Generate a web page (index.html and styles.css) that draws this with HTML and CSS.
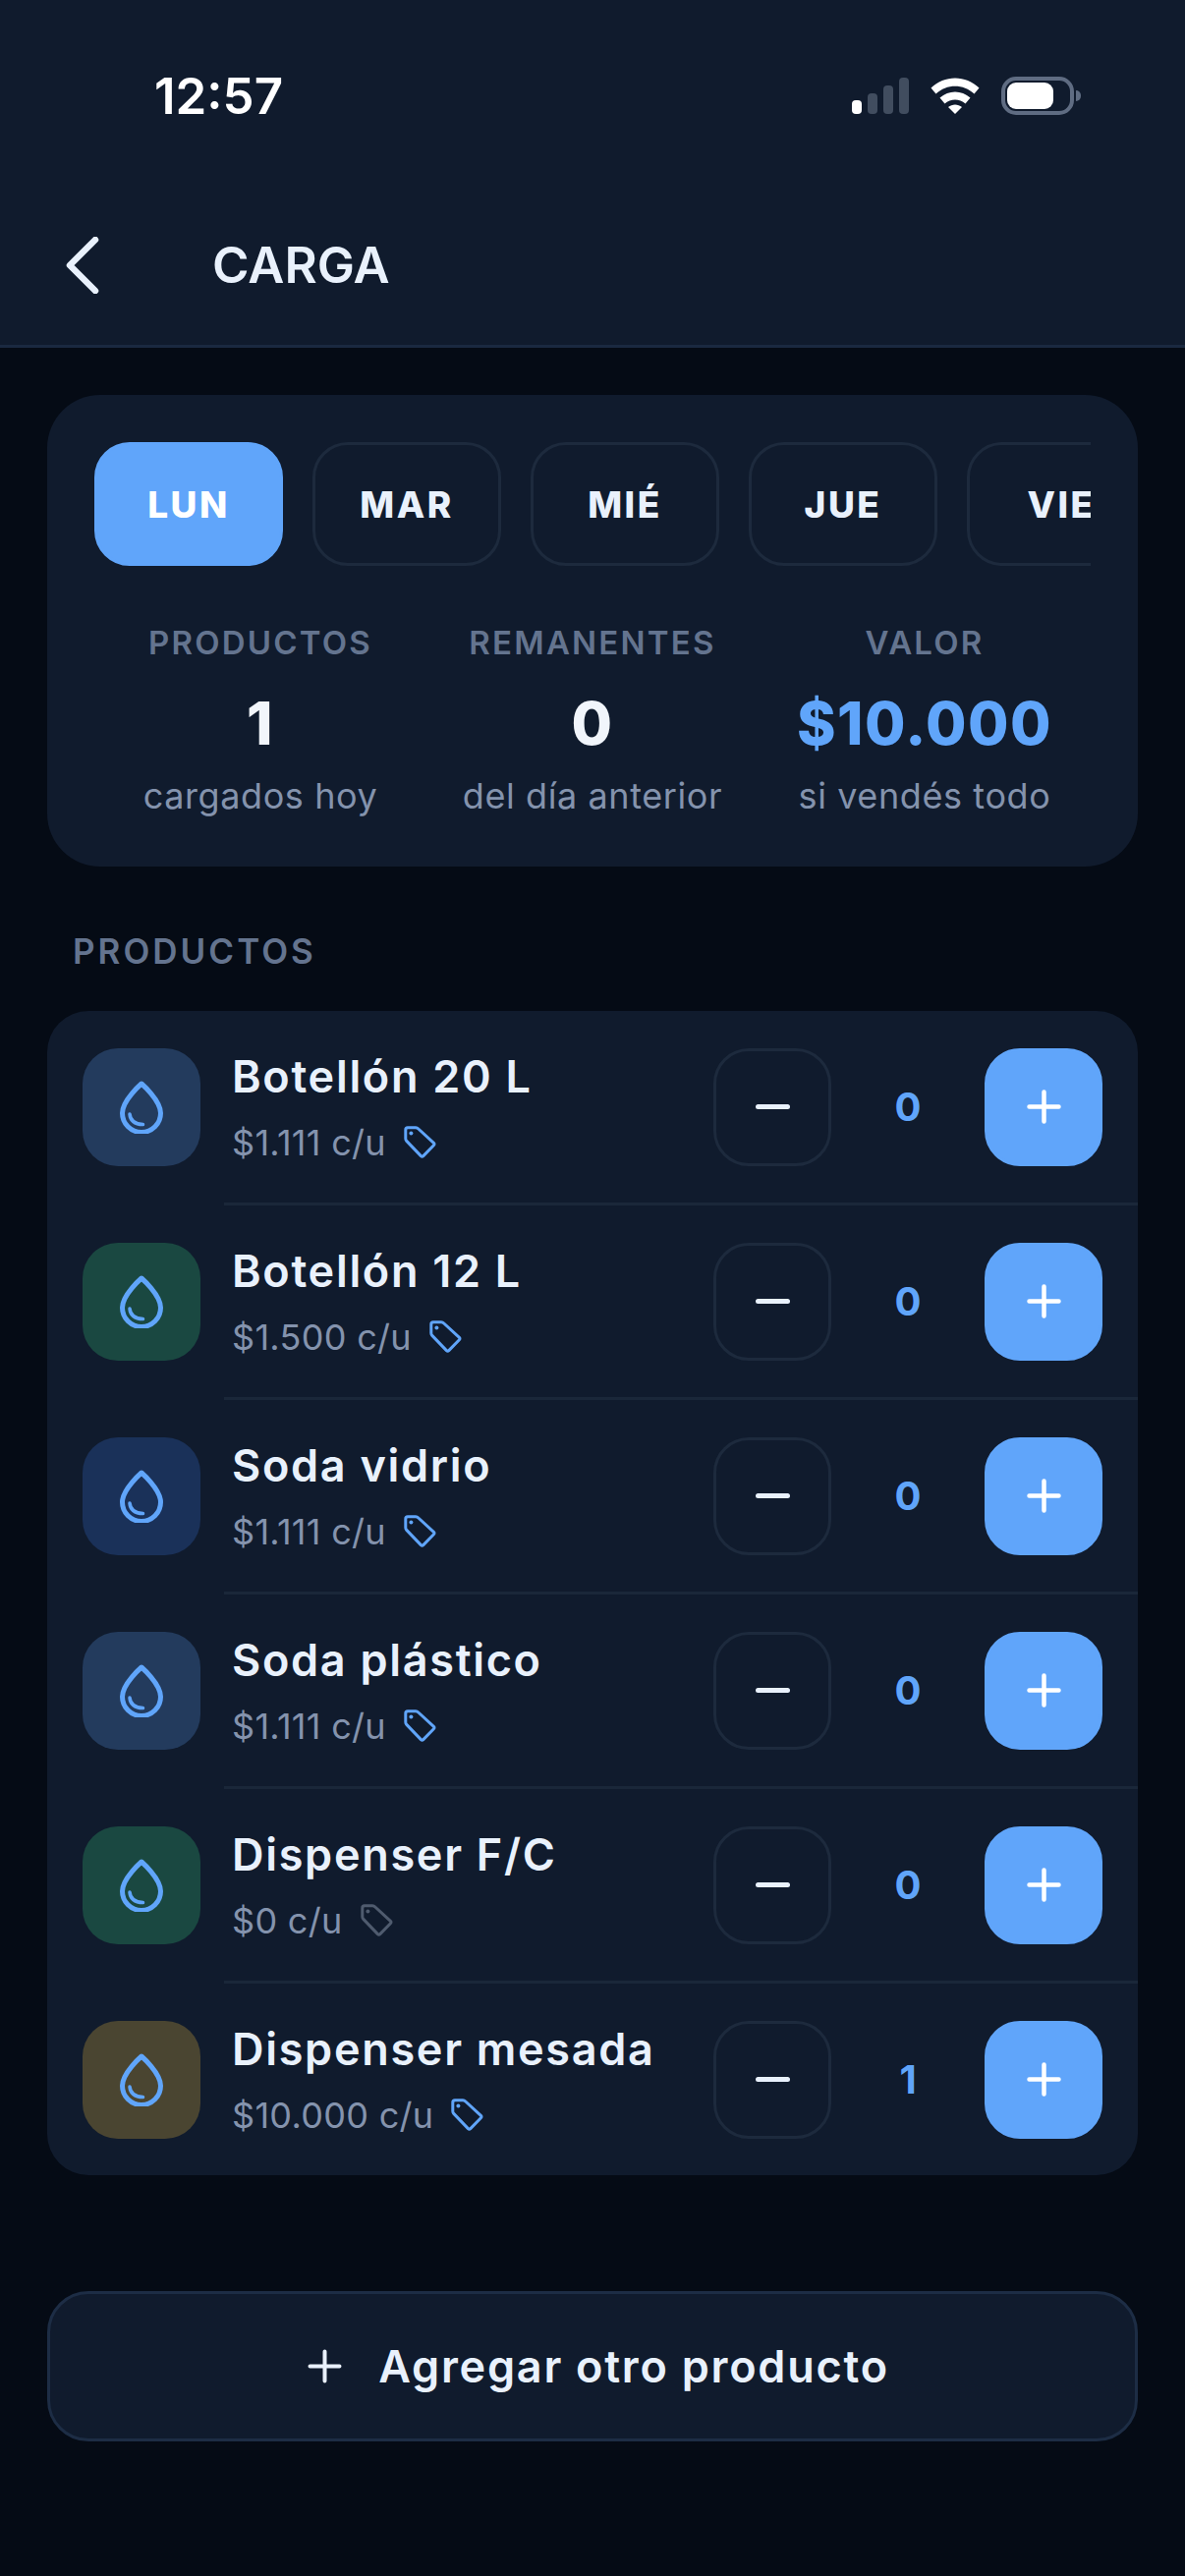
FILE: index.html
```html
<!DOCTYPE html>
<html lang="es">
  <head>
    <meta charset="utf-8">
    <meta name="viewport" content="width=device-width, initial-scale=1.0">
    <title>Carga</title>
    <link rel="stylesheet" href="styles.css">
  </head>
  <body>
    <svg class="defs" aria-hidden="true">
      <symbol id="drop" viewBox="0 0 44 54">
        <path class="drop-outer" d="M22 3 C22 3 2.5 20 2.5 33 A19.5 19.5 0 0 0 41.5 33 C41.5 20 22 3 22 3 Z"/>
        <path class="drop-inner" d="M10 34 C10.5 40.5 15 44.2 23.5 44.6"/>
      </symbol>
      <symbol id="tag" viewBox="0 0 33 33">
        <path class="tag-outer" d="M4 1.8 H12 Q13.6 1.8 14.8 3 L30.4 17.4 Q31.6 18.6 30.4 19.8 L19.8 30.6 Q18.6 31.8 17.4 30.6 L2.8 15.4 Q1.8 14.4 1.8 13 V4 Q1.8 1.8 4 1.8 Z"/>
        <circle class="tag-dot" cx="7.4" cy="7.6" r="2"/>
      </symbol>
      <symbol id="minus" viewBox="0 0 35 35">
        <path d="M2.5 17.5 H32.5"/>
      </symbol>
      <symbol id="plus" viewBox="0 0 35 35">
        <path d="M2.5 17.5 H32.5 M17.5 2.5 V32.5"/>
      </symbol>
    </svg>

    <header class="top">
      <div class="status">
        <span class="clock">12:57</span>
        <div class="status-icons">
          <div class="signal">
            <i class="bar bar-1"></i>
            <i class="bar bar-2"></i>
            <i class="bar bar-3"></i>
            <i class="bar bar-4"></i>
          </div>
          <svg class="wifi" viewBox="0 0 50 37">
            <path d="M0.5 10.5 C14 -3 36 -3 49.5 10.5 L44.5 16.5 C33.5 6 16.5 6 5.5 16.5 Z"/>
            <path d="M9.5 20.5 C18.5 12.5 31.5 12.5 40.5 20.5 L35.5 26.5 C29.5 21 20.5 21 14.5 26.5 Z"/>
            <path d="M18 30 C22 26.6 28 26.6 32 30 L25 37 Z"/>
          </svg>
          <div class="battery">
            <div class="battery-body"><div class="battery-fill"></div></div>
            <div class="battery-cap"></div>
          </div>
        </div>
      </div>
      <div class="nav">
        <svg class="back" viewBox="0 0 34 58">
          <path d="M30 3 L4 29 L30 55"/>
        </svg>
        <h1>CARGA</h1>
      </div>
    </header>

    <main class="content">
      <section class="card summary">
        <div class="days">
          <button class="day active">LUN</button>
          <button class="day">MAR</button>
          <button class="day">MIÉ</button>
          <button class="day">JUE</button>
          <button class="day">VIE</button>
        </div>
        <div class="stats">
          <div class="stat">
            <div class="stat-label">PRODUCTOS</div>
            <div class="stat-value">1</div>
            <div class="stat-sub">cargados hoy</div>
          </div>
          <div class="stat">
            <div class="stat-label">REMANENTES</div>
            <div class="stat-value">0</div>
            <div class="stat-sub">del día anterior</div>
          </div>
          <div class="stat">
            <div class="stat-label">VALOR</div>
            <div class="stat-value accent">$10.000</div>
            <div class="stat-sub">si vendés todo</div>
          </div>
        </div>
      </section>

      <h2 class="section-title">PRODUCTOS</h2>

      <section class="card products">
        <div class="product">
          <div class="thumb thumb-slate"><svg class="drop"><use href="#drop"/></svg></div>
          <div class="info">
            <div class="name">Botellón 20 L</div>
            <div class="price">$1.111 c/u <svg class="tag"><use href="#tag"/></svg></div>
          </div>
          <div class="stepper">
            <button class="step"><svg class="step-icon"><use href="#minus"/></svg></button>
            <span class="qty">0</span>
            <button class="step add"><svg class="step-icon"><use href="#plus"/></svg></button>
          </div>
        </div>
        <div class="product">
          <div class="thumb thumb-green"><svg class="drop"><use href="#drop"/></svg></div>
          <div class="info">
            <div class="name">Botellón 12 L</div>
            <div class="price">$1.500 c/u <svg class="tag"><use href="#tag"/></svg></div>
          </div>
          <div class="stepper">
            <button class="step"><svg class="step-icon"><use href="#minus"/></svg></button>
            <span class="qty">0</span>
            <button class="step add"><svg class="step-icon"><use href="#plus"/></svg></button>
          </div>
        </div>
        <div class="product">
          <div class="thumb thumb-navy"><svg class="drop"><use href="#drop"/></svg></div>
          <div class="info">
            <div class="name">Soda vidrio</div>
            <div class="price">$1.111 c/u <svg class="tag"><use href="#tag"/></svg></div>
          </div>
          <div class="stepper">
            <button class="step"><svg class="step-icon"><use href="#minus"/></svg></button>
            <span class="qty">0</span>
            <button class="step add"><svg class="step-icon"><use href="#plus"/></svg></button>
          </div>
        </div>
        <div class="product">
          <div class="thumb thumb-slate"><svg class="drop"><use href="#drop"/></svg></div>
          <div class="info">
            <div class="name">Soda plástico</div>
            <div class="price">$1.111 c/u <svg class="tag"><use href="#tag"/></svg></div>
          </div>
          <div class="stepper">
            <button class="step"><svg class="step-icon"><use href="#minus"/></svg></button>
            <span class="qty">0</span>
            <button class="step add"><svg class="step-icon"><use href="#plus"/></svg></button>
          </div>
        </div>
        <div class="product">
          <div class="thumb thumb-green"><svg class="drop"><use href="#drop"/></svg></div>
          <div class="info">
            <div class="name">Dispenser F/C</div>
            <div class="price">$0 c/u <svg class="tag muted"><use href="#tag"/></svg></div>
          </div>
          <div class="stepper">
            <button class="step"><svg class="step-icon"><use href="#minus"/></svg></button>
            <span class="qty">0</span>
            <button class="step add"><svg class="step-icon"><use href="#plus"/></svg></button>
          </div>
        </div>
        <div class="product">
          <div class="thumb thumb-olive"><svg class="drop"><use href="#drop"/></svg></div>
          <div class="info">
            <div class="name">Dispenser mesada</div>
            <div class="price">$10.000 c/u <svg class="tag"><use href="#tag"/></svg></div>
          </div>
          <div class="stepper">
            <button class="step"><svg class="step-icon"><use href="#minus"/></svg></button>
            <span class="qty">1</span>
            <button class="step add"><svg class="step-icon"><use href="#plus"/></svg></button>
          </div>
        </div>
      </section>

      <button class="add-product">
        <svg class="add-icon"><use href="#plus"/></svg>
        Agregar otro producto
      </button>
    </main>
  </body>
</html>
```

FILE: styles.css
```css
* {
  box-sizing: border-box;
  margin: 0;
  padding: 0;
}
html, body {
  height: 100%;
}
body {
  background-color: #050b15;
  color: #e9f1fc;
  font-family: Inter, "Noto Sans", sans-serif;
}
button {
  font-family: inherit;
  color: inherit;
  background: none;
  border: 0;
}
.defs {
  display: none;
}

/* header */
.top {
  height: 354px;
  padding-top: 78px;
  background-color: #101b2d;
  border-bottom: 3px solid #1a2940;
}
.status {
  display: flex;
  justify-content: space-between;
  align-items: center;
  height: 39px;
  padding: 0 106px 0 157px;
}
.clock {
  font-size: 51px;
  font-weight: 600;
  line-height: 39px;
  color: #fff;
}
.status-icons {
  display: flex;
  align-items: center;
  gap: 22px;
}
.signal {
  display: flex;
  align-items: flex-end;
  gap: 6px;
  height: 37px;
}
.bar {
  display: block;
  width: 10px;
  border-radius: 4px;
  background-color: #414d5f;
}
.bar-1 { height: 14px; background-color: #fff; }
.bar-2 { height: 21px; }
.bar-3 { height: 29px; }
.bar-4 { height: 37px; }
.wifi {
  width: 50px;
  height: 37px;
  fill: #fff;
}
.battery {
  display: flex;
  align-items: center;
  gap: 2px;
}
.battery-body {
  width: 74px;
  height: 39px;
  padding: 2px;
  border: 4px solid #5f6c82;
  border-radius: 15px;
}
.battery-fill {
  width: 47px;
  height: 27px;
  border-radius: 9px;
  background-color: #fff;
}
.battery-cap {
  width: 5px;
  height: 11px;
  border-radius: 0 5px 5px 0;
  background-color: #5f6c82;
}
.nav {
  display: flex;
  align-items: center;
  gap: 115px;
  height: 60px;
  margin-top: 123px;
  padding-left: 67px;
}
.back {
  width: 34px;
  height: 58px;
  fill: none;
  stroke: #e9f1fc;
  stroke-width: 6.5;
  stroke-linecap: round;
  stroke-linejoin: round;
}
h1 {
  font-size: 51px;
  font-weight: 600;
  line-height: 60px;
}

/* cards */
.content {
  display: flex;
  flex-direction: column;
  padding: 48px;
}
.card {
  background-color: #101b2d;
  border-radius: 42px;
}
.summary {
  height: 480px;
  padding: 48px;
  border-radius: 54px;
}
.days {
  display: flex;
  gap: 30px;
  overflow: hidden;
}
.day {
  flex: none;
  width: 192px;
  height: 126px;
  border: 3px solid #1d2a3d;
  border-radius: 36px;
  font-size: 37px;
  font-weight: 800;
  letter-spacing: 2.5px;
}
.day.active {
  background-color: #60a5fa;
  border-color: #60a5fa;
  color: #fff;
}
.stats {
  display: grid;
  grid-template-columns: repeat(3, 1fr);
  margin-top: 60px;
  text-align: center;
}
.stat-label {
  font-size: 33px;
  font-weight: 600;
  line-height: 36px;
  letter-spacing: 2.2px;
  color: #64748f;
}
.stat-value {
  margin-top: 32px;
  font-size: 60px;
  font-weight: 800;
  line-height: 64px;
  letter-spacing: 1.5px;
  color: #f1f5fb;
}
.stat-value.accent {
  color: #60a5fa;
}
.stat-sub {
  margin-top: 20px;
  font-size: 36px;
  line-height: 44px;
  letter-spacing: 0.6px;
  color: #8493ad;
}
.section-title {
  margin: 66px 0 41px 26px;
  font-size: 35px;
  font-weight: 600;
  line-height: 40px;
  letter-spacing: 3px;
  color: #64748f;
}

/* products */
.products {
  display: flex;
  flex-direction: column;
  gap: 3px;
  overflow: hidden;
}
.product {
  position: relative;
  display: flex;
  align-items: center;
  height: 195px;
  padding: 0 36px;
}
.product + .product::before {
  content: "";
  position: absolute;
  top: -3px;
  left: 180px;
  right: 0;
  height: 3px;
  background-color: #1a2739;
}
.thumb {
  flex: none;
  display: flex;
  align-items: center;
  justify-content: center;
  width: 120px;
  height: 120px;
  border-radius: 36px;
}
.thumb-slate { background-color: #233b5d; }
.thumb-green { background-color: #1a4841; }
.thumb-navy { background-color: #1a3159; }
.thumb-olive { background-color: #4a4531; }
.drop {
  width: 44px;
  height: 54px;
}
.drop-outer {
  fill: none;
  stroke: #60a5fa;
  stroke-width: 5;
  stroke-linejoin: round;
}
.drop-inner {
  fill: none;
  stroke: #60a5fa;
  stroke-width: 3.5;
  stroke-linecap: round;
}
.info {
  flex: 1;
  min-width: 0;
  margin-left: 32px;
}
.name {
  font-size: 45px;
  font-weight: 600;
  line-height: 54px;
  letter-spacing: 1.7px;
  white-space: nowrap;
}
.price {
  display: flex;
  align-items: center;
  gap: 18px;
  margin-top: 18px;
  font-size: 36px;
  line-height: 44px;
  letter-spacing: 0.3px;
  color: #8493ad;
}
.tag {
  width: 33px;
  height: 33px;
  color: #60a5fa;
}
.tag.muted {
  color: #4f5b6e;
}
.tag-outer {
  fill: none;
  stroke: currentColor;
  stroke-width: 3;
  stroke-linejoin: round;
}
.tag-dot {
  fill: currentColor;
}
.stepper {
  flex: none;
  display: flex;
  align-items: center;
}
.step {
  display: flex;
  align-items: center;
  justify-content: center;
  width: 120px;
  height: 120px;
  border: 3px solid #1d2a3d;
  border-radius: 36px;
}
.step.add {
  background-color: #60a5fa;
  border-color: #60a5fa;
}
.step-icon {
  width: 35px;
  height: 35px;
  fill: none;
  stroke: #e9f1fc;
  stroke-width: 5;
  stroke-linecap: round;
}
.step.add .step-icon {
  stroke: #fff;
  stroke-width: 4.5;
}
.qty {
  width: 156px;
  text-align: center;
  font-size: 40px;
  font-weight: 700;
  color: #60a5fa;
}

/* add button */
.add-product {
  display: flex;
  align-items: center;
  justify-content: center;
  gap: 37px;
  height: 153px;
  margin-top: 118px;
  padding-left: 12px;
  background-color: #101b2d;
  border: 3px solid #1d2d45;
  border-radius: 42px;
  font-size: 45px;
  font-weight: 600;
  letter-spacing: 1.75px;
}
.add-icon {
  width: 35px;
  height: 35px;
  fill: none;
  stroke: #e9f1fc;
  stroke-width: 4;
  stroke-linecap: round;
}
```
